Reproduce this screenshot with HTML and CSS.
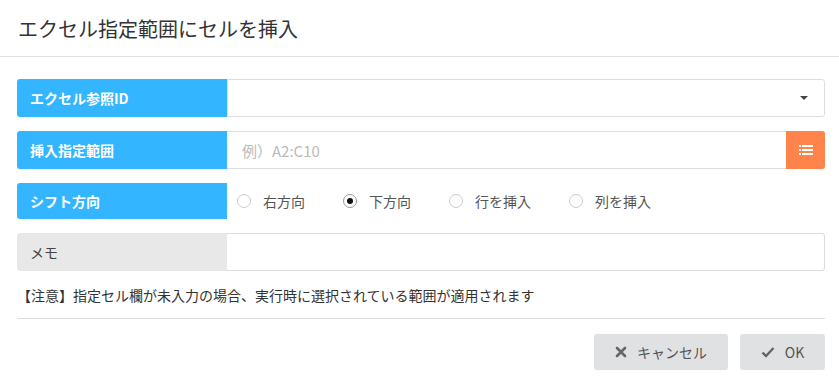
FILE: index.html
```html
<!DOCTYPE html>
<html lang="ja">
<head>
<meta charset="UTF-8">
<title>エクセル指定範囲にセルを挿入</title>
<link rel="stylesheet" href="styles.css">
</head>
<body>
<div class="dialog">
  <div class="dialog-header">エクセル指定範囲にセルを挿入</div>

  <div class="dialog-body">
    <div class="row">
      <div class="label">エクセル参照ID</div>
      <div class="field select">
        <span class="caret"></span>
      </div>
    </div>

    <div class="row">
      <div class="label">挿入指定範囲</div>
      <div class="field with-btn">
        <span class="placeholder">例）A2:C10</span>
        <span class="list-btn">
          <svg width="14" height="12" viewBox="0 0 14 12">
            <rect x="0" y="1" width="2" height="2" fill="#fff"/>
            <rect x="3" y="1" width="11" height="2" fill="#fff"/>
            <rect x="0" y="5" width="2" height="2" fill="#fff"/>
            <rect x="3" y="5" width="11" height="2" fill="#fff"/>
            <rect x="0" y="9" width="2" height="2" fill="#fff"/>
            <rect x="3" y="9" width="11" height="2" fill="#fff"/>
          </svg>
        </span>
      </div>
    </div>

    <div class="row short">
      <div class="label">シフト方向</div>
      <div class="radios">
        <label class="radio"><span class="circle"></span>右方向</label>
        <label class="radio"><span class="circle on"></span>下方向</label>
        <label class="radio"><span class="circle"></span>行を挿入</label>
        <label class="radio"><span class="circle"></span>列を挿入</label>
      </div>
    </div>

    <div class="row">
      <div class="label gray">メモ</div>
      <div class="field memo"></div>
    </div>

    <p class="note">【注意】指定セル欄が未入力の場合、実行時に選択されている範囲が適用されます</p>
  </div>

  <div class="dialog-footer">
    <button class="btn btn-cancel">
      <svg width="12" height="12" viewBox="0 0 12 12"><path d="M2 2 L10 10 M10 2 L2 10" stroke="#666" stroke-width="2.6" stroke-linecap="round"/></svg>
      キャンセル
    </button>
    <button class="btn btn-ok">
      <svg width="14" height="12" viewBox="0 0 14 12"><path d="M1.5 6.5 L5 10 L12.5 2" fill="none" stroke="#666" stroke-width="2.4"/></svg>
      OK
    </button>
  </div>
</div>
</body>
</html>
```

FILE: styles.css
```css
body {
  margin: 0;
  background-color: #fff;
  font-family: "Noto Sans CJK JP", "Noto Sans", sans-serif;
  color: #333;
}

.dialog {
  width: 839px;
}

.dialog-header {
  height: 57px;
  box-sizing: border-box;
  padding: 14px 18px 0;
  font-size: 20px;
  color: #333;
  border-bottom: 1px solid #e0e0e0;
}

.dialog-body {
  padding: 22px 14px 0 17px;
}

.row {
  display: flex;
  height: 38px;
  margin-bottom: 14px;
}

.row.short {
  height: 36px;
}

.label {
  width: 210px;
  flex-shrink: 0;
  box-sizing: border-box;
  padding-left: 13px;
  display: flex;
  align-items: center;
  background-color: #33b5ff;
  color: #fff;
  font-size: 14px;
  font-weight: bold;
  border-radius: 3px 0 0 3px;
}

.label.gray {
  background-color: #e8e8e8;
  color: #444;
  font-weight: normal;
}

.field {
  flex: 1;
  position: relative;
  display: flex;
  align-items: center;
  border: 1px solid #ddd;
  border-left: none;
  border-radius: 0 3px 3px 0;
}

.select {
  border-left: 1px solid #ddd;
}

.caret {
  position: absolute;
  right: 16px;
  top: 16px;
  width: 0;
  height: 0;
  border-left: 4px solid transparent;
  border-right: 4px solid transparent;
  border-top: 4px solid #444;
}

.placeholder {
  padding-left: 15px;
  font-size: 15px;
  color: #bbb;
}

.list-btn {
  position: absolute;
  right: -1px;
  top: -1px;
  bottom: -1px;
  width: 39px;
  display: flex;
  align-items: center;
  justify-content: center;
  background-color: #ff844c;
  border-radius: 0 3px 3px 0;
}

.radios {
  display: flex;
  align-items: center;
  padding-left: 10px;
  font-size: 14px;
  color: #555;
}

.radio {
  display: flex;
  align-items: center;
}

.radio:nth-child(1) { width: 106px; }
.radio:nth-child(2) { width: 106px; }
.radio:nth-child(3) { width: 120px; }

.circle {
  width: 14px;
  height: 14px;
  border: 1px solid #ccc;
  border-radius: 50%;
  margin-right: 12px;
  box-sizing: border-box;
  position: relative;
}

.circle.on {
  border-color: #999;
}

.circle.on::after {
  content: "";
  position: absolute;
  left: 3px;
  top: 3px;
  width: 6px;
  height: 6px;
  border-radius: 50%;
  background-color: #111;
}

.note {
  margin: 14px 0 0;
  font-size: 14px;
  color: #333;
}

.dialog-footer {
  margin: 13px 14px 0 17px;
  border-top: 1px solid #ddd;
  padding-top: 15px;
  display: flex;
  justify-content: flex-end;
  gap: 12px;
}

.btn {
  height: 36px;
  border: none;
  border-radius: 3px;
  background-color: #e0e1e3;
  color: #555;
  font-family: "Noto Sans CJK JP", "Noto Sans", sans-serif;
  font-size: 14px;
  display: flex;
  align-items: center;
  justify-content: center;
  gap: 10px;
}

.btn-cancel {
  width: 134px;
}

.btn-ok {
  width: 85px;
}
```
